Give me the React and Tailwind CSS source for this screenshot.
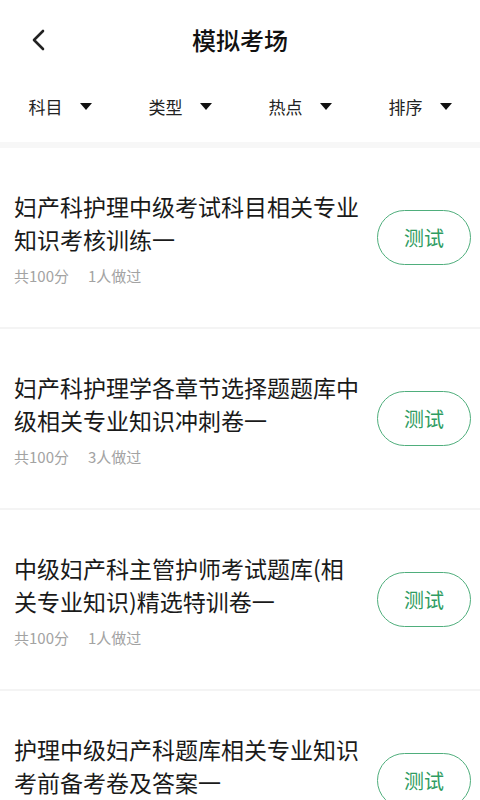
import React from "react";

const items = [
  { title: "妇产科护理中级考试科目相关专业知识考核训练一", count: "1人做过" },
  { title: "妇产科护理学各章节选择题题库中级相关专业知识冲刺卷一", count: "3人做过" },
  { title: "中级妇产科主管护师考试题库(相关专业知识)精选特训卷一", count: "1人做过" },
  { title: "护理中级妇产科题库相关专业知识考前备考卷及答案一", count: "1人做过" },
];

const filters = ["科目", "类型", "热点", "排序"];

export default function App() {
  return (
    <div
      className="w-[480px] h-[800px] overflow-hidden bg-white"
      style={{ fontFamily: '"Noto Sans CJK SC", "Noto Sans", sans-serif' }}
    >
      <div className="relative h-[80px] flex items-center justify-center">
        <svg className="absolute left-[28px] top-[28px]" width="22" height="24" viewBox="0 0 22 24">
          <path d="M15 3 L6 12 L15 21" fill="none" stroke="#222" strokeWidth="2.6" strokeLinecap="round" strokeLinejoin="round" />
        </svg>
        <span className="text-[24px] font-medium text-[#111] leading-none">模拟考场</span>
      </div>
      <div className="grid grid-cols-4 h-[52px]">
        {filters.map((f) => (
          <div key={f} className="flex items-center justify-center gap-[17px]">
            <span className="text-[17px] text-[#222] leading-none">{f}</span>
            <svg width="12" height="7" viewBox="0 0 12 7">
              <path d="M0 0 H12 L6 7 Z" fill="#111" />
            </svg>
          </div>
        ))}
      </div>
      <div className="h-[10px]" />
      <div className="h-[6px] bg-[#f7f7f7]" />
      {items.map((it, i) => (
        <div key={i} className="h-[181px] flex items-center pl-[14px] pr-[9px] border-b-2 border-[#f4f4f4]">
          <div className="w-[350px] flex flex-col">
            <div className="text-[23px] leading-[33px] text-[#1a1a1a]">{it.title}</div>
            <div className="mt-[10px] flex items-center gap-[19px] text-[15px] leading-[20px] text-[#a3a3a3]">
              <span>共100分</span>
              <span>{it.count}</span>
            </div>
          </div>
          <div className="ml-auto w-[94px] h-[55px] rounded-full border-[1.5px] border-[#4fae7c] flex items-center justify-center text-[20px] text-[#2f9c62]">
            测试
          </div>
        </div>
      ))}
    </div>
  );
}
